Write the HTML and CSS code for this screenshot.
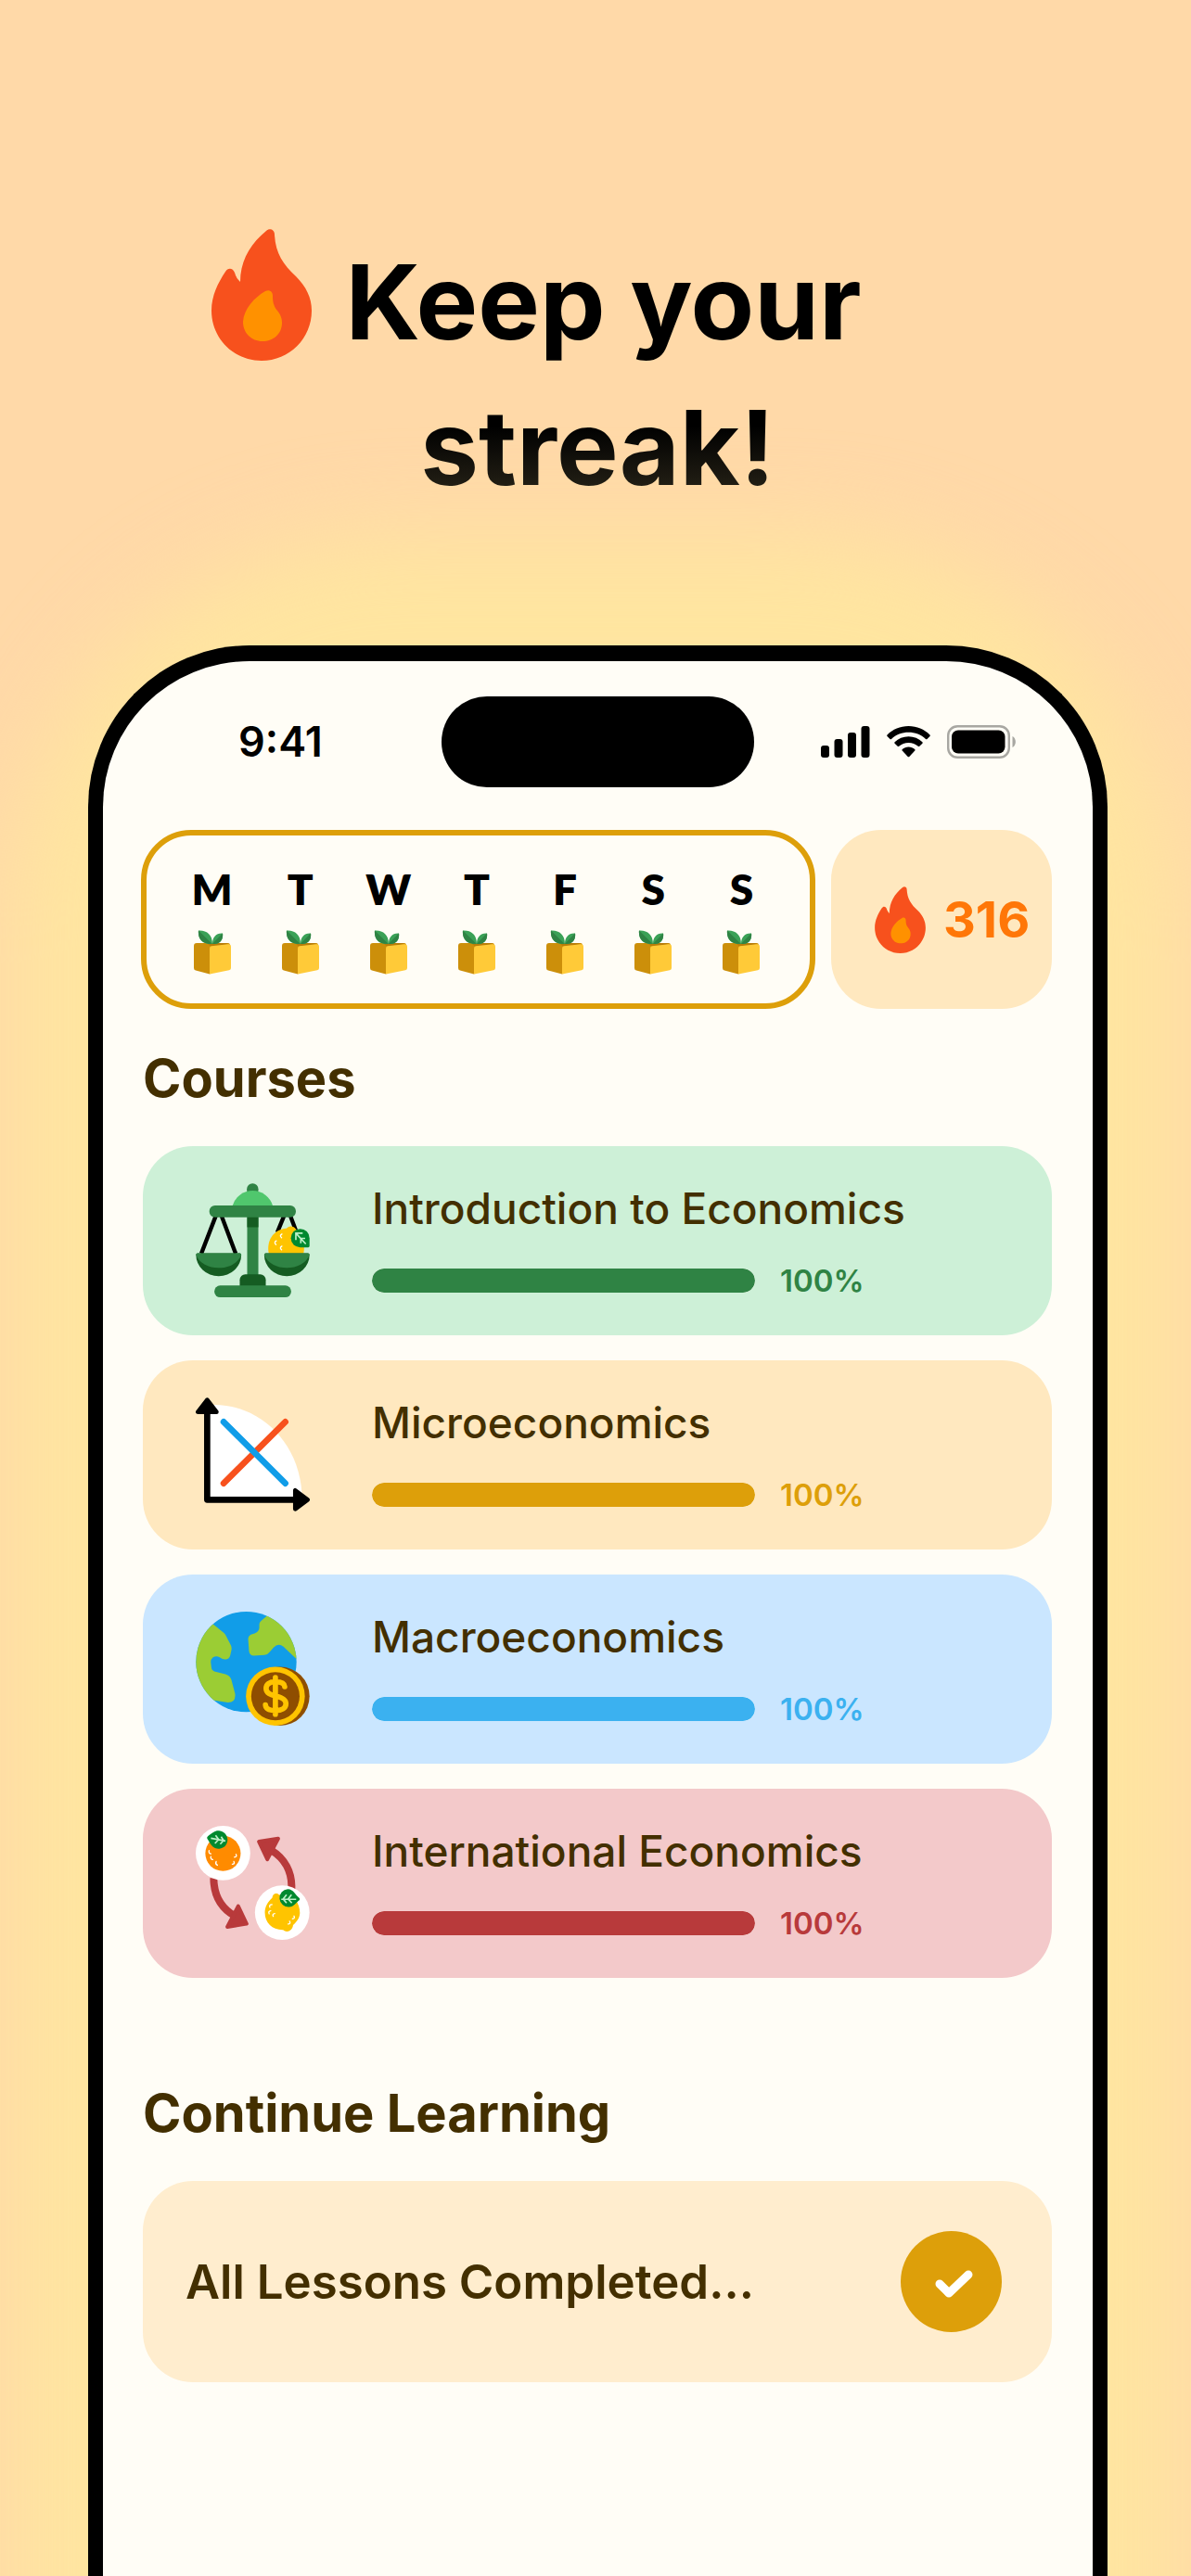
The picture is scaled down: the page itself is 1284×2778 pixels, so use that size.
FILE: index.html
```
<!DOCTYPE html>
<html lang="en">
<head>
<meta charset="utf-8">
<meta name="viewport" content="width=device-width, initial-scale=1">
<title>Keep your streak!</title>
<link rel="stylesheet" href="styles.css">
</head>
<body>
<svg class="defs" aria-hidden="true">
  <symbol id="flame" viewBox="0 0 108 142">
    <path fill="#f7511d" d="M59 2C62-1 68 0 68 6C69 26 77 38 91 51C102 62 108 74 108 88C108 118 84 142 54 142C24 142 0 118 0 88C0 72 7 58 15 46C18 41 23 42 25 47C26 51 28 54 31 57C31 34 42 16 59 2Z"/>
    <path fill="#ff9100" d="M58 67C62 65 66 67 66 72C66 79 67 83 71 88C75 93 76 97 76 101C76 113 67 121 55 121C43 121 34 112 34 100C35 86 46 74 58 67Z"/>
  </symbol>
  <symbol id="pot" viewBox="0 0 40 48">
    <path fill="#cc8f0a" d="M0 17Q0 14 3 14H37Q39 14 39 17L17 47.500L2 43.500Q0 43 0 41Z"/>
    <path fill="#b97d08" d="M14 14H37L33 16L18 17.500Z"/>
    <path fill="#ffca38" d="M17 20Q17 17.500 19 17.300L37 15.300Q40 15 40 18V41Q40 43 38 43.300L17 47.500Z"/>
    <path fill="#3ba157" d="M5 .5C14 0 20 5 20 14.700C10 16 4 10 5 .5ZM31 3.500C24 3 20 8 20 14.700C28 16 32 10 31 3.500Z"/>
    <path fill="#2f8344" d="M5 .5L19.500 14.700C10 15.500 4 10 5 .5ZM31 3.500L20 14.700C28 16 32 10 31 3.500Z"/>
  </symbol>
</svg>

<main class="page">
  <h1 class="headline">
    <span class="headline-row"><svg class="headline-flame" aria-hidden="true"><use href="#flame"/></svg><span class="headline-text">Keep your</span></span>
    <span class="headline-row"><span class="headline-text headline-text-fade">streak!</span></span>
  </h1>

  <div class="phone">
    <header class="status">
      <time class="status-time">9:41</time>
      <div class="island"></div>
      <div class="status-icons">
        <svg width="53" height="34" viewBox="0 0 53 34" aria-hidden="true">
          <rect x="0" y="21" width="9" height="13" rx="3"/><rect x="14.500" y="14" width="9" height="20" rx="3"/><rect x="29" y="7" width="9" height="27" rx="3"/><rect x="43.500" y="0" width="9" height="34" rx="3"/>
        </svg>
        <svg width="47" height="34" viewBox="0 0 47 34" aria-hidden="true">
          <path d="M23.500 0C32.500 0 40.500 3.500 46.500 9.500Q47.200 10.300 46.500 11L43.500 14Q42.800 14.600 42 14C37 9.300 30.500 6.800 23.500 6.800S10 9.300 5 14Q4.200 14.600 3.500 14L.5 11Q-.2 10.300 .5 9.500C6.500 3.500 14.500 0 23.500 0Z"/>
          <path d="M23.500 11.300C29.300 11.300 34.500 13.500 38.400 17.200Q39.200 18 38.400 18.800L35.300 21.800Q34.600 22.400 33.800 21.800C31 19.300 27.400 18 23.500 18S16 19.300 13.200 21.800Q12.400 22.400 11.700 21.800L8.600 18.800Q7.800 18 8.600 17.200C12.500 13.500 17.700 11.300 23.500 11.300Z"/>
          <path d="M23.500 22.600C26 22.600 28.400 23.500 30.200 25Q31 25.800 30.300 26.600L24.300 33Q23.500 33.700 22.700 33L16.700 26.600Q16 25.800 16.800 25C18.600 23.500 21 22.600 23.500 22.600Z"/>
        </svg>
        <svg width="75" height="36" viewBox="0 0 75 36" aria-hidden="true">
          <rect x="1.200" y="1.200" width="65.600" height="33.600" rx="10" fill="none" stroke="#a8a7a2" stroke-width="2.400"/>
          <rect x="5" y="5.500" width="57.500" height="25" rx="7"/>
          <path fill="#a8a7a2" d="M70.500 12C75 14 75 22 70.500 24Z"/>
        </svg>
      </div>
    </header>

    <section class="summary">
      <ol class="days">
        <li><span>M</span><svg class="pot"><use href="#pot"/></svg></li>
        <li><span>T</span><svg class="pot"><use href="#pot"/></svg></li>
        <li><span>W</span><svg class="pot"><use href="#pot"/></svg></li>
        <li><span>T</span><svg class="pot"><use href="#pot"/></svg></li>
        <li><span>F</span><svg class="pot"><use href="#pot"/></svg></li>
        <li><span>S</span><svg class="pot"><use href="#pot"/></svg></li>
        <li><span>S</span><svg class="pot"><use href="#pot"/></svg></li>
      </ol>
      <div class="streak"><svg class="streak-flame" aria-hidden="true"><use href="#flame"/></svg><span>316</span></div>
    </section>

    <h2 class="section-title">Courses</h2>
    <ul class="courses">
      <li class="course course-green">
        <svg class="course-icon" viewBox="64 81 368 368" aria-hidden="true">
          <rect x="229" y="82" width="37" height="40" rx="18" fill="#2f8344"/>
          <path fill="#50c76d" d="M182 155A68 68 0 0 1 313 155Z"/>
          <path stroke="#000" stroke-width="13" d="M129 186L82 308M147 186L193 308M349 186L327 240M369 186L388 236"/>
          <rect x="230" y="185" width="36" height="200" fill="#2f8344"/>
          <rect x="230" y="185" width="36" height="38" fill="#155c22"/>
          <rect x="108" y="153" width="279" height="38" rx="18" fill="#2f8344"/>
          <rect x="206" y="375" width="84" height="60" rx="18" fill="#155c22"/>
          <rect x="124" y="411" width="248" height="38" rx="19" fill="#2f8344"/>
          <path fill="#ffc400" d="M300 308C292 270 312 230 357 227C362 218 380 216 387 229C410 246 418 275 412 308Z"/>
          <path class="shine" d="M342 245Q333 250 341 257M324 267Q315 272 323 279M342 284Q333 289 341 296"/>
          <path fill="#00892f" d="M401 228A30 30 0 0 1 431 258V284Q431 288 427 288H401A30 30 0 0 1 401 228Z"/>
          <path class="vein" d="M387 242L419 277M387 264V242H409M403 275V259L417 259"/>
          <path fill="#155c22" d="M65 312Q65 307 70 307H206Q211 307 211 312A73 69 0 0 1 65 312ZM285 312Q285 307 290 307H426Q431 307 431 312A73 69 0 0 1 285 312Z"/>
          <path fill="#2f8344" d="M65 312Q65 307 70 307H206Q211 307 211 312C200 340 170 354 138 354S76 340 65 312ZM285 312Q285 307 290 307H426Q431 307 431 312C420 340 390 354 358 354S296 340 285 312Z"/>
        </svg>
        <div class="course-body">
          <h3 id="c1">Introduction to Economics</h3>
          <div class="meter"><progress value="100" max="100" aria-labelledby="c1"></progress><span>100%</span></div>
        </div>
      </li>
      <li class="course course-amber">
        <svg class="course-icon" viewBox="64 53 368 368" aria-hidden="true">
          <path fill="#fff" d="M101 383V77H125C275 77 407 205 407 383Z"/>
          <g fill="none" stroke-linecap="round" stroke-linejoin="round">
            <path stroke="#000" stroke-width="20" d="M101 100V383H390"/>
            <path fill="#000" stroke="#000" stroke-width="14" d="M101 61L71 100H131ZM425 383L385 353V413Z"/>
            <path stroke="#f7511d" stroke-width="20" d="M154 330L353 132"/>
            <path stroke="#119de8" stroke-width="20" d="M154 132L353 330"/>
          </g>
        </svg>
        <div class="course-body">
          <h3 id="c2">Microeconomics</h3>
          <div class="meter"><progress value="100" max="100" aria-labelledby="c2"></progress><span>100%</span></div>
        </div>
      </li>
      <li class="course course-blue">
        <svg class="course-icon" viewBox="64 55 368 368" aria-hidden="true">
          <clipPath id="globe"><circle cx="227" cy="217" r="162"/></clipPath>
          <circle cx="227" cy="217" r="162" fill="#119de8"/>
          <g clip-path="url(#globe)" fill="#9bcd34">
            <path d="M119 95L155 124Q160 128 163 136L177 163Q181 171 179 180L175 198Q171 210 158 209Q151 209 141 202Q130 196 119 203Q111 210 113 222L115 238Q117 246 124 248L160 257Q175 262 179 275L191 320Q194 348 168 348L115 340L40 300V120Z"/>
            <path d="M295 68L274 86Q269 91 269 98V108Q267 121 254 125L242 129Q234 133 233 142L236 183Q238 197 252 197L286 195Q296 194 302 186L315 171Q330 155 347 168L395 214V60Z"/>
          </g>
          <circle cx="336" cy="328" r="95" fill="#8f4e00"/>
          <circle cx="321" cy="328" r="95" fill="#ffc400"/>
          <circle cx="321" cy="328" r="78" fill="#8f4e00"/>
          <path fill="none" stroke="#ffc400" stroke-width="17" stroke-linecap="round" d="M321 268V386M351 297C350 284 335 281 321 281C302 281 291 289 291 303C291 318 306 323 321 327C340 331 355 337 355 352C355 367 341 374 321 374C303 374 290 370 289 356"/>
        </svg>
        <div class="course-body">
          <h3 id="c3">Macroeconomics</h3>
          <div class="meter"><progress value="100" max="100" aria-labelledby="c3"></progress><span>100%</span></div>
        </div>
      </li>
      <li class="course course-red">
        <svg class="course-icon" viewBox="64 57 368 368" aria-hidden="true">
          <g fill="none" stroke="#b83a3b" stroke-linejoin="round">
            <path stroke-width="24" d="M122 225C122 280 145 322 190 348M373 262C376 205 350 162 308 136"/>
            <path fill="#b83a3b" stroke-width="12" d="M201 316L228 373L166 383ZM295 165L268 108L330 98Z"/>
          </g>
          <circle cx="152" cy="145" r="88" fill="#fff"/>
          <circle cx="343" cy="337" r="88" fill="#fff"/>
          <circle cx="152" cy="146" r="57" fill="#ff8b00"/>
          <path fill="#00892f" d="M101 98Q99 93 104 90C118 80 126 72 139 73A29 29 0 1 1 115 120C109 112 107 107 101 98Z"/>
          <path class="vein" d="M113 97L160 106M128 88L138 101L126 114M146 92L154 104L143 116"/>
          <path class="shine" d="M107 137Q105 146 113 147M113 156Q111 165 119 166M130 172Q126 180 134 184M194 149Q198 158 189 158M187 172Q191 181 182 181"/>
          <path fill="#ffc400" d="M311 289C311 277 324 271 333 280C372 270 400 300 400 338C399 355 390 366 378 377C377 395 358 404 346 393C312 394 287 370 287 337C287 318 297 302 311 289Z"/>
          <path fill="#00892f" d="M399 296Q401 292 397 289C386 280 380 262 361 261A29 29 0 1 0 366 319C380 318 388 304 399 296Z"/>
          <path class="vein" d="M388 294H340M373 279L362 293L374 306M357 279L346 293L357 306"/>
          <path class="shine" d="M310 311Q300 311 303 320M306 331Q297 332 301 341M319 340Q310 341 314 349M381 348Q385 357 376 357M367 365Q371 374 362 374"/>
        </svg>
        <div class="course-body">
          <h3 id="c4">International Economics</h3>
          <div class="meter"><progress value="100" max="100" aria-labelledby="c4"></progress><span>100%</span></div>
        </div>
      </li>
    </ul>

    <h2 class="section-title section-title-late">Continue Learning</h2>
    <div class="continue">
      <span>All Lessons Completed...</span>
      <button class="done" type="button" aria-label="Completed">
        <svg viewBox="0 0 109 109" aria-hidden="true"><path d="M42 57L52 67L73 47"/></svg>
      </button>
    </div>
  </div>
</main>
</body>
</html>
```

FILE: styles.css
```
* { box-sizing: border-box; margin: 0; padding: 0; }
ul, ol { list-style: none; }
svg { display: block; flex: none; }
body { font-family: Inter, "Liberation Sans", sans-serif; color: #432f00; background: #ffd9a8; }
.defs { position: absolute; width: 0; height: 0; }

.page {
  position: relative;
  isolation: isolate;
  display: flex;
  flex-direction: column;
  min-height: 100vh;
  padding: 247px 90px 0 95px;
  overflow: hidden;
}
/* Soft yellow glow behind the phone */
.page::before {
  content: "";
  position: absolute;
  z-index: -1;
  inset: 576px 10px -600px 10px;
  border-radius: 420px;
  background: #ffe5a0;
  filter: blur(48px);
}

.headline { font-size: 112px; font-weight: 700; line-height: 157px; margin-bottom: 135px; color: #000; }
.headline-row { display: flex; justify-content: center; gap: 36px; }
.headline-flame { width: 108px; height: 142px; margin-left: -132px; }
.headline-text-fade { color: transparent; background: linear-gradient(#000 35%, #282418 85%); background-clip: text; -webkit-background-clip: text; }

.phone {
  flex: 1;
  padding: 38px 44px 0 43px;
  border: 16px solid #000;
  border-top-width: 17px;
  border-bottom: 0;
  border-radius: 174px 174px 0 0;
  background: #fffdf6;
}

.status { display: grid; grid-template-columns: 1fr 337px 1fr; align-items: center; color: #000; margin-bottom: 46px; }
.status-time { padding-left: 103px; font-size: 45px; font-weight: 600; line-height: 54px; }
.island { height: 98px; border-radius: 49px; background: #000; }
.status-icons { display: flex; align-items: center; justify-content: flex-end; gap: 18px; padding-right: 38px; }

.summary { display: flex; gap: 17px; height: 193px; margin-left: -2px; }
.days {
  flex: 1;
  display: grid;
  grid-template-columns: repeat(7, 1fr);
  padding: 33px 26px 0 23px;
  border: 6px solid #dd9f0a;
  border-radius: 54px;
}
.days li { display: flex; flex-direction: column; align-items: center; gap: 19px; font-family: Lato, "Liberation Sans", sans-serif; font-size: 46px; font-weight: 800; line-height: 50px; color: #000; }
.pot { width: 40px; height: 48px; }
.streak { display: flex; align-items: center; gap: 19px; width: 238px; padding-left: 47px; border-radius: 54px; background: #ffe8bf; color: #ff7708; font-size: 54px; font-weight: 700; }
.streak-flame { width: 55px; height: 72px; }

.section-title { margin: 40px 0 38px; font-size: 56px; font-weight: 700; line-height: 70px; }
.section-title-late { margin-top: 111px; }

.courses { display: grid; gap: 27px; }
.course { display: flex; gap: 67px; min-height: 204px; padding: 40px 57px; border-radius: 54px; }
.course-icon { width: 123px; height: 123px; }
.course-body { flex: 1; }
.course h3 { font-size: 46px; font-weight: 500; line-height: 54px; margin-bottom: 38px; }
.meter { display: flex; align-items: center; gap: 27px; height: 26px; font-size: 33px; font-weight: 600; }
.meter span { color: var(--tone); }
progress { appearance: none; -webkit-appearance: none; width: 413px; height: 26px; border: 0; border-radius: 13px; overflow: hidden; background: #fffdf6; }
progress::-webkit-progress-bar { background: #fffdf6; }
progress::-webkit-progress-value { background: var(--tone); border-radius: 13px; }
.course-green { --tone: #2f8344; background: #cdf0d7; }
.course-amber { --tone: #dd9f0a; background: #ffe8bf; }
.course-blue { --tone: #3bb1f0; background: #cae6ff; }
.course-red { --tone: #b83a3b; background: #f3c9ca; }
.shine { fill: none; stroke: #fff; stroke-width: 4; stroke-linecap: round; }
.vein { fill: none; stroke: #bdf0c8; stroke-width: 5; }

.continue { display: flex; align-items: center; justify-content: space-between; min-height: 217px; padding: 0 54px 0 46px; border-radius: 54px; background: #ffedce; font-size: 51px; font-weight: 600; }
.done { width: 109px; height: 109px; border: 0; border-radius: 50%; background: #dd9f0a; }
.done path { fill: none; stroke: #fff; stroke-width: 9; stroke-linecap: round; stroke-linejoin: round; }
```
